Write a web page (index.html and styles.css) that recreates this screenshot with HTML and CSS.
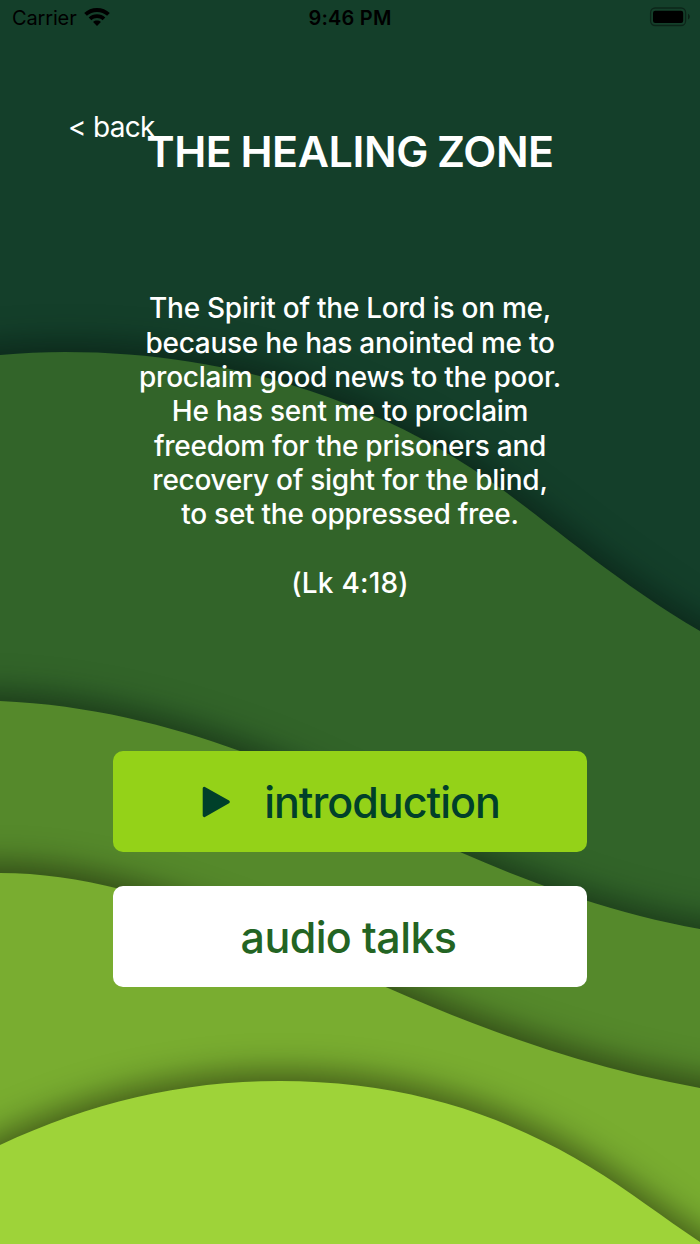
FILE: index.html
```html
<!DOCTYPE html>
<html>
    <head>
        <meta charset="utf-8">
        <meta name="viewport" content="width=device-width, initial-scale=1.0">
        <title>The Healing Zone</title>
        <link rel="stylesheet" href="styles.css">
    </head>
    <body>
        <svg class="waves" viewBox="0 0 700 1244" width="700" height="1244">
            <defs>
                <filter id="shadeDark" filterUnits="userSpaceOnUse" x="-100" y="200" width="900" height="1200" color-interpolation-filters="sRGB">
                    <feDropShadow dx="0" dy="-10" stdDeviation="16" flood-color="#020f0a" flood-opacity="0.5" />
                </filter>
                <filter id="shade" filterUnits="userSpaceOnUse" x="-100" y="200" width="900" height="1200" color-interpolation-filters="sRGB">
                    <feDropShadow dx="0" dy="-10" stdDeviation="16" flood-color="#0c0a00" flood-opacity="0.5" />
                </filter>
            </defs>
            <path class="wave1" filter="url(#shadeDark)" d="M-90 368L0 355C22 353 43 352 65 352C240 352 390 407 503 490C560 532 620 584 700 631L790 680V1400H-90Z" />
            <path class="wave2" filter="url(#shadeDark)" d="M-90 699L0 701C90 705 168 725 240 751C320 780 385 817 460 852C540 887 620 915 700 929L790 943V1400H-90Z" />
            <path class="wave3" filter="url(#shade)" d="M-90 873H0C40 873 80 879 120 889C210 912 300 950 388 988C490 1033 590 1068 700 1088L790 1104V1400H-90Z" />
            <path class="wave4" filter="url(#shade)" d="M-90 1195L0 1145C90 1103 180 1081 280 1081C400 1081 500 1112 590 1167C628 1190 664 1218 700 1242L790 1302V1400H-90Z" />
        </svg>

        <div class="statusbar">
            <div class="carrier">
                <span>Carrier</span>
                <svg width="26" height="19" viewBox="0 0 26 19">
                    <path d="M13 0C8 0 3.5 1.9 .2 5L2.9 7.8C5.600 5.300 9.100 3.900 13 3.900S20.400 5.300 23.100 7.800L25.800 5C22.500 1.900 18 0 13 0Z" />
                    <path d="M13 6.300C9.800 6.300 6.900 7.500 4.700 9.500L7.400 12.200C8.900 10.900 10.900 10.100 13 10.100S17.100 10.900 18.600 12.200L21.300 9.500C19.100 7.500 16.200 6.300 13 6.300Z" />
                    <path d="M13 12.500C11.500 12.500 10.200 13 9.100 13.900L13 18L16.900 13.900C15.800 13 14.500 12.500 13 12.500Z" />
                </svg>
            </div>
            <div class="time">9:46 PM</div>
            <svg class="battery" width="42" height="20" viewBox="0 0 42 20">
                <rect class="case" x="1.600" y="1" width="35" height="17.500" rx="4.500" />
                <rect x="4" y="3.700" width="30.200" height="12.200" rx="2.200" />
                <path class="cap" d="M39 6.800C41.400 8 41.400 11.300 39 12.500Z" />
            </svg>
        </div>

        <a class="back" href="#">&lt; back</a>
        <h1 class="title">THE HEALING ZONE</h1>

        <p class="verse">
            The Spirit of the Lord is on me,<br />
            because he has anointed me to<br />
            proclaim good news to the poor.<br />
            He has sent me to proclaim<br />
            freedom for the prisoners and<br />
            recovery of sight for the blind,<br />
            to set the oppressed free.<br />
            <br />
            <span class="ref">(Lk 4:18)</span>
        </p>

        <div class="buttons">
            <a class="button intro" href="#">
                <svg width="29" height="32" viewBox="0 0 29 32">
                    <path d="M2.200 2.200L26.300 15.900L2.200 29.600Z" />
                </svg>
                <span>introduction</span>
            </a>
            <a class="button talks" href="#"><span>audio talks</span></a>
        </div>
    </body>
</html>
```
FILE: styles.css
```css
html {padding: 0;}
body {
    font-family: Inter, "Liberation Sans", sans-serif;
    display: flex;
    flex-direction: column;
    height: 1244px;
    margin: 0;
    padding: 0;
    overflow: hidden;
    color: #fff;
    background: #143f2a;
}
a {color: inherit; text-decoration: none;}

/* background sits behind everything */
.waves {position: absolute; top: 0; left: 0; z-index: -1;}
.wave1 {fill: #326429;}
.wave2 {fill: #55892b;}
.wave3 {fill: #79ad30;}
.wave4 {fill: #9ed339;}

.statusbar {
    display: grid;
    grid-template-columns: 1fr auto 1fr;
    align-items: center;
    height: 36px;
    padding: 0 9px 0 12px;
    font-size: 20px;
    color: #000;
}
.carrier {display: flex; align-items: center; gap: 7px; letter-spacing: -0.15px;}
.carrier svg {margin-top: -2px;}
.time {margin-left: -3px; font-weight: 600; letter-spacing: 0.2px;}
.battery {justify-self: end; margin-top: -2px;}
.case {fill: none; stroke: #000; stroke-opacity: 0.4; stroke-width: 1.3;}
.cap {fill-opacity: 0.45;}

.back {
    align-self: flex-start;
    margin: 74px 0 0 68px;
    font-size: 28px;
    line-height: 34px;
    letter-spacing: -0.7px;
}

.title {
    margin: -19px 0 0;
    font-size: 43px;
    line-height: 52px;
    font-weight: 600;
    letter-spacing: -0.4px;
    word-spacing: -1.5px;
    text-align: center;
}

.verse {
    margin: 114.4px 0 0;
    font-size: 28px;
    line-height: 34.3px;
    font-weight: 500;
    letter-spacing: -0.27px;
    text-align: center;
}
.ref {letter-spacing: 0.2px;}

.buttons {
    display: flex;
    flex-direction: column;
    gap: 33.5px;
    width: 473.4px;
    margin: 150.8px auto 0;
}
.button {
    display: flex;
    align-items: center;
    justify-content: center;
    box-sizing: border-box;
    height: 101.5px;
    border-radius: 10px;
    font-size: 43px;
    font-weight: 500;
}
.intro {gap: 33px; padding-left: 2px; letter-spacing: -1px; color: #00402a; background: #94d218;}
.intro svg {margin-top: 1px;}
.intro svg path {fill: #00402a; stroke: #00402a; stroke-width: 3; stroke-linejoin: round;}
.talks {padding-right: 3px; letter-spacing: -0.6px; color: #236423; background: #fff;}
```
